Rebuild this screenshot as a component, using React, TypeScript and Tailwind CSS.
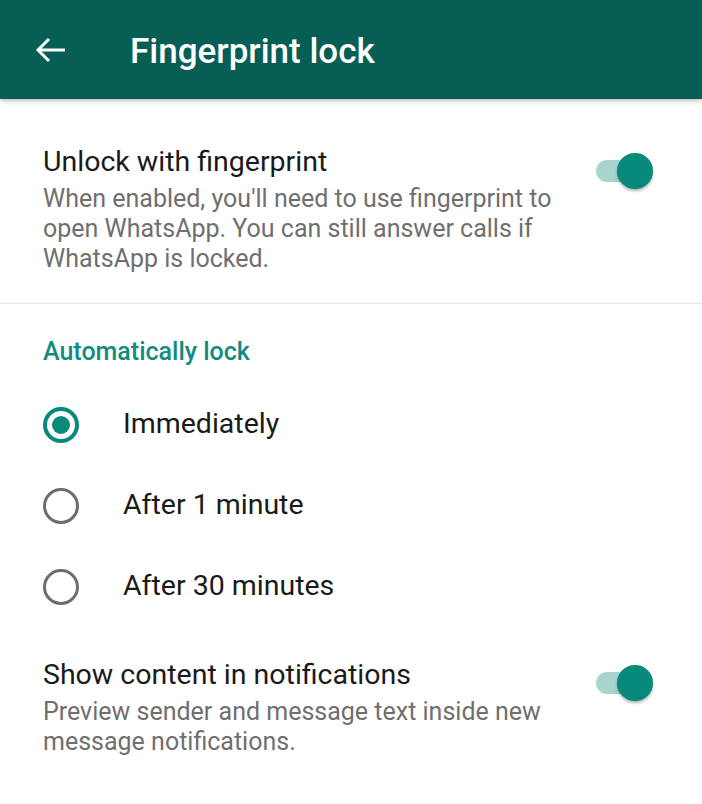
function Toggle() {
    return (
        <div className="relative w-[58px] h-[40px] shrink-0">
            <div className="absolute left-[-2px] top-[9px] w-[52px] h-[22px] rounded-full bg-[#a8d5cf]" />
            <div className="absolute left-[19px] top-[2px] w-[36px] h-[36px] rounded-full bg-[#07897b] shadow-[0_2px_3px_rgba(0,0,0,0.3)]" />
        </div>
    );
}

function Radio({ checked, label }: { checked?: boolean; label: string }) {
    return (
        <div className="h-[81px] flex items-center">
            <div className="w-[123px] pl-[43px] flex items-center">
                {checked ? (
                    <div className="w-[36px] h-[36px] rounded-full border-[4px] border-[#07897b] flex items-center justify-center">
                        <div className="w-[18px] h-[18px] rounded-full bg-[#07897b]" />
                    </div>
                ) : (
                    <div className="w-[36px] h-[36px] rounded-full border-[3px] border-[#6d6d6d]" />
                )}
            </div>
            <span className="text-[28.5px] text-[#1a1a1a]">{label}</span>
        </div>
    );
}

export default function App() {
    return (
        <div className="w-[702px] h-[804px] bg-white overflow-hidden" style={{ fontFamily: "Roboto, 'Noto Sans', sans-serif" }}>
            <header className="h-[99px] bg-[#075e54] flex items-center shadow-[0_2px_4px_rgba(0,0,0,0.25)] relative">
                <div className="w-[130px] pl-[35px] flex items-center">
                    <svg width="30" height="26" viewBox="0 0 30 26" fill="none" stroke="white" strokeWidth="3" strokeLinejoin="miter">
                        <path d="M30 13H3M14 2L3 13L14 24" />
                    </svg>
                </div>
                <h1 className="text-white text-[35px] font-medium mt-[5px]">Fingerprint lock</h1>
            </header>

            <section className="pl-[43px] pr-[46px] pt-[46px] pb-[29px] flex items-start justify-between border-b border-[#e8e8e8]">
                <div className="w-[540px]">
                    <h2 className="text-[28.5px] text-[#1a1a1a] leading-[34px]">Unlock with fingerprint</h2>
                    <p className="mt-[5px] text-[25px] text-[#6f6f6f] leading-[30px]">
                        When enabled, you'll need to use fingerprint to open WhatsApp. You can still answer calls if WhatsApp is locked.
                    </p>
                </div>
                <div className="mt-[6px]">
                    <Toggle />
                </div>
            </section>

            <section className="pt-[32px]">
                <h3 className="pl-[43px] text-[25px] font-medium text-[#128c7e] leading-[32px]">Automatically lock</h3>
                <div className="mt-[16px]">
                    <Radio checked label="Immediately" />
                    <Radio label="After 1 minute" />
                    <Radio label="After 30 minutes" />
                </div>
            </section>

            <section className="pl-[43px] pr-[46px] pt-[31px] flex items-start justify-between">
                <div className="w-[540px]">
                    <h2 className="text-[28.5px] text-[#1a1a1a] leading-[34px]">Show content in notifications</h2>
                    <p className="mt-[5px] text-[25px] text-[#6f6f6f] leading-[30px]">
                        Preview sender and message text inside new message notifications.
                    </p>
                </div>
                <div className="mt-[5px]">
                    <Toggle />
                </div>
            </section>
        </div>
    );
}
